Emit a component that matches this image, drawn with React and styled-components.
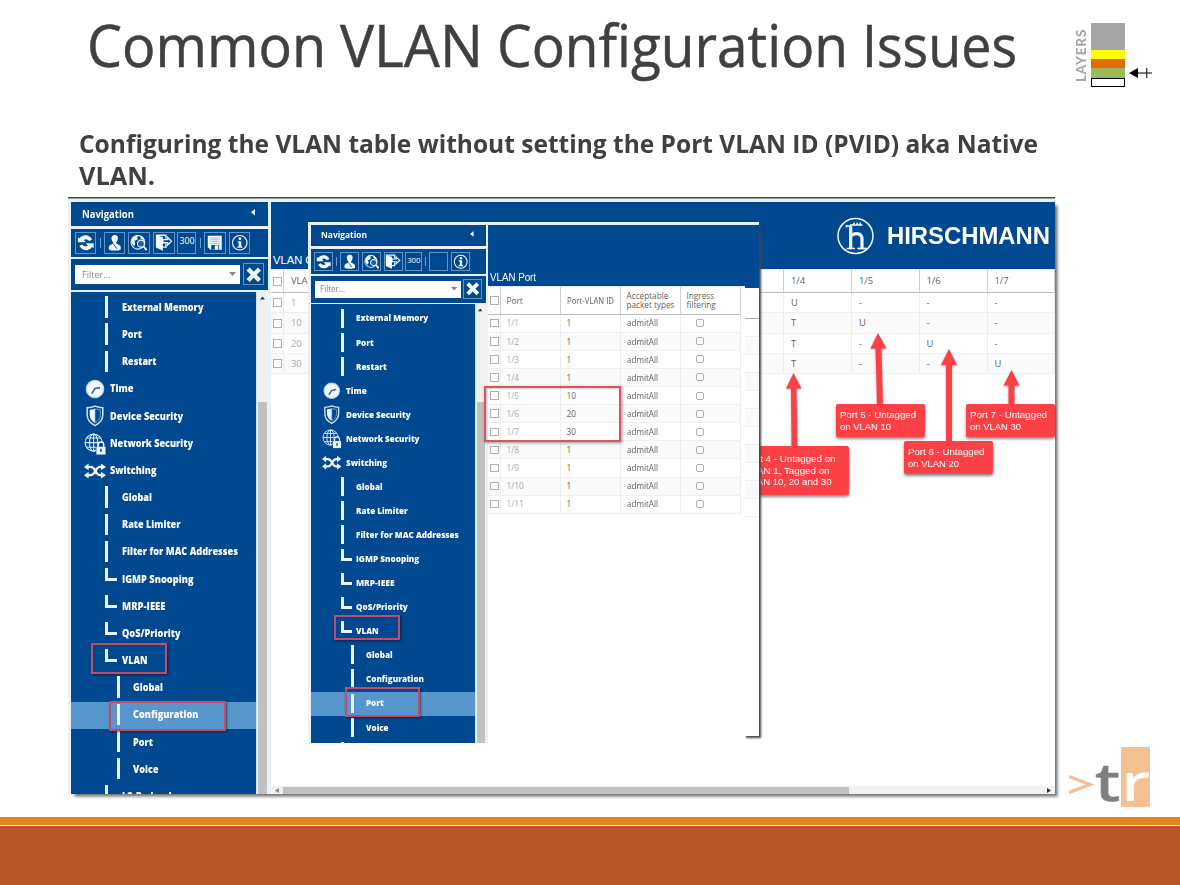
import React, { useLayoutEffect, useRef } from "react";
import styled, { createGlobalStyle } from "styled-components";

const BLUE = "#00488f";
const RED = "#fb4146";

const Global = createGlobalStyle`
  * { box-sizing: border-box; }
  body { margin: 0; background: #fff; overflow: hidden; }
`;

/* ---------- text stretched to a fixed measure ---------- */
const FitBox = styled.span`
  display: inline-block;
  flex: none;
  white-space: nowrap;
`;
const FitSpan = styled.span`
  display: inline-block;
  white-space: nowrap;
  transform-origin: 0 50%;
`;
function Fit({ w, children }) {
  const ref = useRef(null);
  useLayoutEffect(() => {
    const el = ref.current;
    const apply = () => {
      el.style.transform = "none";
      const width = el.getBoundingClientRect().width;
      if (width) el.style.transform = `scaleX(${w / width})`;
    };
    apply();
    document.fonts.ready.then(apply);
  }, [w]);
  return (
    <FitBox style={{ width: w }}>
      <FitSpan ref={ref}>{children}</FitSpan>
    </FitBox>
  );
}

/* ---------- slide ---------- */
const Slide = styled.main`
  position: relative;
  width: 1180px;
  height: 885px;
  overflow: hidden;
  background: #fff;
  display: flex;
  flex-direction: column;
  color: #404040;
`;
const Header = styled.header`
  display: flex;
  justify-content: space-between;
  height: 117px;
  padding: 0 28px 0 87px;
`;
const Title = styled.h1`
  margin: 8px 0 0;
  font: 400 59px/72px "Open Sans", sans-serif;
  font-variant-ligatures: none;
  -webkit-text-stroke: 0.5px #404040;
  color: #404040;
  width: 940px;
  display: flex;
  gap: 14px;
`;
const Layers = styled.div`
  display: flex;
  gap: 3px;
  align-items: flex-start;
  padding-top: 23px;
  svg { margin: 44px 0 0 1px; }
`;
const LayersText = styled.span`
  writing-mode: vertical-rl;
  transform: rotate(180deg);
  font: 900 13.500px/14px Lato, sans-serif;
  letter-spacing: 0.8px;
  color: #a6a6a6;
  height: 59px;
  text-align: left;
`;
const Stack = styled.div`
  width: 34px;
  display: flex;
  flex-direction: column;
`;
const Band = styled.div`
  height: ${(p) => p.$h}px;
  background: ${(p) => p.$c};
  border: ${(p) => (p.$line ? "1px solid #000" : "0")};
`;
const Lead = styled.p`
  margin: 11px 0 0 79px;
  font: 700 25px/31.5px "Open Sans", sans-serif;
  color: #404040;
  height: 69px;
  display: flex;
  flex-direction: column;
  align-items: flex-start;
`;
const Rule = styled.div`
  width: 987px;
  height: 2px;
  margin-left: 68px;
  border-top: 1px solid #404040;
  border-bottom: 1px solid #a0a0a0;
`;
const Footer = styled.footer`
  margin-top: auto;
  height: 68px;
  background: #ba572a;
  border-top: 8px solid #e2841d;
  box-shadow: inset 0 1px 0 #fff3e6;
`;
const Brand = styled.div`
  position: absolute;
  left: 1067px;
  top: 747px;
  display: flex;
  height: 60px;
  font: 500 52px/60px "Noto Sans", sans-serif;
  color: #7f7f7f;
`;
const BrandT = styled.span`
  width: 26px;
  padding-top: 4px;
  -webkit-text-stroke: 0.6px #7f7f7f;
`;
const BrandR = styled.span`
  width: 29px;
  height: 60px;
  padding: 4px 0 0 0;
  background: #f5c193;
  color: #fff;
`;

/* ---------- windows ---------- */
const Window = styled.section`
  position: absolute;
  display: flex;
  overflow: hidden;
  font-family: "Open Sans", sans-serif;
`;
const OuterWindow = styled(Window)`
  left: 68px;
  top: 199px;
  width: 987px;
  height: 595px;
  padding: 3px 0 0 3px;
  background: #e7f2fa;
`;
const OuterShade = styled.div`
  position: absolute;
  left: 72px;
  top: 203px;
  width: 983px;
  height: 591px;
  box-shadow: 2px 2px 3px 0.5px #6e6e6e;
`;
const InnerWindow = styled(Window)`
  left: 308px;
  top: 222px;
  width: 451px;
  height: 521px;
  padding: 3px 0 0 3px;
  background: #e7f2fa;
`;
const InnerEdge = styled.div`
  position: absolute;
  left: 745px;
  top: 227px;
  width: 14px;
  height: 509px;
  box-shadow: 1px 1px 2px 0.5px #444;
  clip-path: inset(0 -6px -6px 0);
`;

/* ---------- navigation (sizes in em: 10px or 8.86px base) ---------- */
const NavBox = styled.nav`
  flex: none;
  font-size: ${(p) => p.$k * 10}px;
  width: 19.7em;
  display: flex;
  flex-direction: column;
  color: #fff;
`;
const NavHead = styled.div`
  height: 2.4em;
  background: ${BLUE};
  display: flex;
  align-items: center;
  justify-content: space-between;
  padding: 0 1.3em 0 1.1em;
  b { font-size: 1em; line-height: 1; }
  svg { width: 0.4em; height: 0.65em; margin-top: -0.3em; }
`;
const Tools = styled.div`
  height: 2.85em;
  margin-top: 0.27em;
  background: ${BLUE};
  display: flex;
  align-items: center;
  padding-left: 0.35em;
`;
const Tool = styled.div`
  width: ${(p) => p.$w || 2.17}em;
  height: 2.2em;
  border: 1px solid #5f93c6;
  margin-right: ${(p) => p.$gap || 0.29}em;
  display: flex;
  align-items: center;
  justify-content: center;
  svg { width: 1.75em; height: 1.75em; }
  span { font-size: 0.88em; margin-top: -0.4em; }
`;
const Divider = styled.i`
  width: 1px;
  height: 1em;
  background: #6c9ccb;
  margin-right: 0.3em;
`;
const FilterRow = styled.div`
  height: 3.05em;
  margin-top: 0.2em;
  background: ${BLUE};
  display: flex;
  align-items: center;
  padding-left: 0.4em;
  gap: 0.25em;
`;
const FilterInput = styled.div`
  width: 16.5em;
  height: 1.9em;
  background: #fff;
  display: flex;
  align-items: center;
  justify-content: space-between;
  padding: 0 0.4em 0 0.65em;
  color: #888;
  span { font-size: 0.97em; }
  svg { width: 0.7em; height: 0.4em; }
`;
const TreeWrap = styled.div`
  flex: 1;
  min-height: 0;
  margin-top: 0.2em;
  display: flex;
  background: #f0f0f0;
`;
const Tree = styled.div`
  width: 18.6em;
  border-right: 1px solid #cfe3f2;
  background: ${BLUE};
  overflow: hidden;
  padding-top: 0.26em;
`;
const TreeRow = styled.div`
  position: relative;
  height: 2.717em;
  display: flex;
  align-items: center;
  padding-left: ${(p) => p.$pad}em;
  background: ${(p) => (p.$on ? "#5795cd" : "transparent")};
  font-weight: 700;
  line-height: 1;
  b { font-size: 0.97em; }
`;
const Bar = styled.i`
  align-self: flex-start;
  width: ${(p) => (p.$elbow ? 1.2 : 0.3)}em;
  height: ${(p) => (p.$elbow ? 1.3 : 2.15)}em;
  margin: 0.2em ${(p) => (p.$elbow ? 0.45 : 1.35)}em 0 0;
  border-left: 0.34em solid #e9f6ff;
  border-bottom: ${(p) => (p.$elbow ? "0.34em solid #e9f6ff" : "0")};
`;
const Glyph = styled.i`
  width: 2.3em;
  margin-right: 0.4em;
  display: flex;
  justify-content: center;
  svg { width: 2.2em; height: 2.2em; }
`;
const ScrollBar = styled.div`
  flex: 1;
  display: flex;
  flex-direction: column;
  align-items: center;
  svg { width: 0.5em; height: 0.4em; margin-top: 0.4em; }
`;
const Thumb = styled.div`
  width: 0.9em;
  margin-top: 10.2em;
  flex: 1;
  background: #c1c1c1;
`;
const Mark = styled.div`
  position: absolute;
  left: ${(p) => p.$x}em;
  top: ${(p) => p.$y}em;
  width: ${(p) => p.$w}em;
  height: ${(p) => p.$h}em;
  border: 2px solid #c24b65;
  box-shadow: 1px 1px 2px #0007;
  z-index: 2;
`;

const W = "#f2f9ff";
const ArrowLeft = () => <svg viewBox="0 0 5 8"><path d="M5 0v8L0 4z" fill={W} /></svg>;
const ArrowDown = () => <svg viewBox="0 0 8 4" preserveAspectRatio="none"><path d="M0 0h8L4 4z" fill="#888" /></svg>;
const ArrowUp = () => <svg viewBox="0 0 8 5"><path d="M0 5h8L4 0z" fill="#333" /></svg>;
const Refresh = () => (
  <svg viewBox="0 0 20 20" fill={W}>
    <path d="M1 9.500V3.800l1.700 1.300C5 1.800 9 .8 12.500 2c2.300.8 4 2.500 4.800 4.500l-3.600 1.600c-1.200-2.200-4-3-6-1.200L10 9.500z" />
    <path d="M19 10.500v5.700l-1.700-1.300c-2.300 3.300-6.300 4.300-9.800 3.100-2.300-.8-4-2.500-4.800-4.500l3.600-1.600c1.200 2.200 4 3 6 1.200L10 10.500z" />
  </svg>
);
const Person = () => (
  <svg viewBox="0 0 20 20" fill={W}>
    <path d="M10 1c3 0 4 2 3.6 4.500-.3 2-1 3.500-2 4.200l.2 1.200 3.700 2C17 14 17.300 16 16.500 18c-2 1.300-11 1.300-13 0-.8-2-.3-4 1-5.100l3.700-2 .2-1.200C7.200 9 6.600 7.500 6.300 5.500 6 3 7.200 1 10 1z" />
    <path d="M8.200 11l4.500 6" stroke={BLUE} strokeWidth="1.100" />
  </svg>
);
const GlobeSearch = () => (
  <svg viewBox="0 0 20 20">
    <circle cx="9" cy="9.500" r="7.800" fill="none" stroke={W} strokeWidth="1.200" />
    <path d="M2 6c2-3.500 5-4.800 8-4.500L8 4l1 2-4 2 1 3-1 3C2 12 1 9 2 6zM12 2c3 1 4.500 4 4.500 6L14 6l-2-1z" fill={W} />
    <circle cx="12.500" cy="11" r="4" fill="#1f64a8" stroke={W} strokeWidth="1.300" />
    <path d="M15.300 14l3.700 4.500" stroke={W} strokeWidth="2.200" />
  </svg>
);
const Exit = () => (
  <svg viewBox="0 0 20 20">
    <path d="M1 1.500h11.500v4M12.500 11v4H8" fill="none" stroke={W} strokeWidth="1.600" />
    <path d="M1 1.500l8 2V19l-8-3.500z" fill={W} />
    <path d="M9 6.500h5.500V4L19 8.300l-4.500 4.300V10H9z" fill={BLUE} stroke={W} strokeWidth="1.500" />
  </svg>
);
const Floppy = () => (
  <svg viewBox="0 0 20 20">
    <path d="M2 2h16v16H5l-3-3z" fill={W} />
    <path d="M4.500 4.500h11M4.500 6.500h11M4.500 8.500h11M4 10.800h12" stroke="#6d9ccb" strokeWidth=".7" />
    <path d="M6 12.500h9V18H6z" fill={BLUE} />
    <path d="M10 13h4v5h-4z" fill={W} />
  </svg>
);
const Info = () => (
  <svg viewBox="0 0 20 20">
    <circle cx="10" cy="10" r="8.300" fill="none" stroke={W} strokeWidth="1.300" />
    <circle cx="10.200" cy="5.400" r="1.600" fill={W} />
    <path d="M7.500 8.200h4.200v6h1.300v1.500H7.300v-1.500h1.500V9.700H7.500z" fill={W} />
  </svg>
);
const Cross = () => (
  <svg viewBox="0 0 20 20"><path d="M3.500 3.500l13 13M16.500 3.500l-13 13" stroke={W} strokeWidth="5" /></svg>
);
const Clock = () => (
  <svg viewBox="0 0 24 24">
    <circle cx="12" cy="12" r="9.500" fill="#f4f9fd" stroke="#b5d0ea" strokeWidth="1.300" />
    <circle cx="12" cy="12" r="7.600" fill="none" stroke="#b7cde2" strokeWidth=".7" strokeDasharray=".8 3" />
    <path d="M17.500 10.500l-5.500 1-3.500 5.500" fill="none" stroke="#2d6299" strokeWidth="1.700" />
  </svg>
);
const Shield = () => (
  <svg viewBox="0 0 24 24">
    <path d="M12 1.200c2.500 1 5.500 1.600 8.500 1.700v8c0 5-3.500 9-8.500 11.600C7 20 3.500 16 3.500 11V2.900c3-.1 6-.7 8.500-1.700z" fill={BLUE} stroke="#c8e0f4" strokeWidth="1.700" />
    <path d="M12 4.200v15.300c-3.500-2-5.800-5-5.800-8.700V5.300C8.300 5.200 10.300 4.800 12 4.200z" fill={W} />
    <path d="M12 4.200c1.700.6 3.700 1 5.800 1.100v5.500c0 3.700-2.300 6.700-5.800 8.700z" fill="none" stroke="#8fb8de" strokeWidth=".8" />
  </svg>
);
const GlobeLock = () => (
  <svg viewBox="0 0 24 24">
    <g fill="none" stroke="#d6eafa" strokeWidth="1.200">
      <circle cx="10.500" cy="10.500" r="9.300" />
      <ellipse cx="10.500" cy="10.500" rx="4.500" ry="9.300" />
      <path d="M10.500 1.200v18.600M1.200 10.500h18.600M2.800 5.500h15.400M2.800 15.500h12" />
    </g>
    <path d="M13 14h10v8H13z" fill={BLUE} />
    <path d="M15.500 15.500v-2.700a3 3 0 0 1 6 0v2.700" fill={BLUE} stroke={W} strokeWidth="1.500" />
    <path d="M13.500 15h10v8.500h-10z" fill={W} />
    <path d="M18.500 17.200v3.600" stroke={BLUE} strokeWidth="1.600" />
  </svg>
);
const Shuffle = () => (
  <svg viewBox="0 0 24 24">
    <path d="M3 7.500h4c3 0 4 1.500 5.500 4.500s2.500 4.500 5 4.500h3M3 16.500h4c3 0 4-1.500 5.500-4.500S15 7.500 17.500 7.500h3" fill="none" stroke={W} strokeWidth="2.600" />
    <path d="M18.500 3.700l5.500 3.800-5.500 3.800zM18.500 12.700l5.500 3.800-5.500 3.800zM5 3.700L0 7.500l5 3.800zM5 12.700l-5 3.800 5 3.800z" fill={W} />
  </svg>
);

const TREE = [
  ["bar", "External Memory", 81.5],
  ["bar", "Port", 20],
  ["bar", "Restart", 34.5],
  [Clock, "Time", 23.500],
  [Shield, "Device Security", 73],
  [GlobeLock, "Network Security", 83],
  [Shuffle, "Switching", 46.500],
  ["bar", "Global", 30],
  ["bar", "Rate Limiter", 58.500],
  ["bar", "Filter for MAC Addresses", 116],
  ["elbow", "IGMP Snooping", 71.500],
  ["elbow", "MRP-IEEE", 43.500],
  ["elbow", "QoS/Priority", 58.500],
  ["elbow", "VLAN", 25.500],
  ["sub", "Global", 30],
  ["sub", "Configuration", 65.500],
  ["sub", "Port", 20],
  ["sub", "Voice", 25.500],
];

function Navigation({ k, active, save, marks, next }) {
  const rows = [...TREE, ["bar", next, 72]];
  return (
    <NavBox $k={k}>
      <NavHead><b><Fit w={52 * k}>Navigation</Fit></b><ArrowLeft /></NavHead>
      <Tools>
        <Tool $gap={0.35}><Refresh /></Tool>
        <Divider />
        <Tool><Person /></Tool>
        <Tool><GlobeSearch /></Tool>
        <Tool><Exit /></Tool>
        <Tool $w={1.9} $gap={0.35}><span>300</span></Tool>
        <Divider />
        <Tool>{save && <Floppy />}</Tool>
        <Tool><Info /></Tool>
      </Tools>
      <FilterRow>
        <FilterInput><span><Fit w={28.500 * k}>Filter...</Fit></span><ArrowDown /></FilterInput>
        <Tool><Cross /></Tool>
      </FilterRow>
      <TreeWrap>
        <Tree>
          {rows.map(([kind, text, w], i) => {
            const on = kind === "sub" && text === active;
            const isIcon = typeof kind !== "string";
            const Icon = kind;
            return (
              <TreeRow key={i} $on={on} $pad={isIcon ? 1.2 : kind === "sub" ? 4.550 : 3.400}>
                {isIcon ? <Glyph><Icon /></Glyph> : <Bar $elbow={kind === "elbow"} />}
                {text && <b><Fit w={w * k}>{text}</Fit></b>}
                {marks[i] && <Mark $x={marks[i][0]} $y={marks[i][1]} $w={marks[i][2]} $h={marks[i][3]} />}
              </TreeRow>
            );
          })}
        </Tree>
        <ScrollBar><ArrowUp /><Thumb /></ScrollBar>
      </TreeWrap>
    </NavBox>
  );
}

/* ---------- content panes ---------- */
const Pane = styled.div`
  flex: none;
  display: flex;
  flex-direction: column;
  margin-left: ${(p) => p.$gap}px;
  background: #fff;
  width: ${(p) => p.$w}px;
`;
const Banner = styled.div`
  flex: none;
  height: ${(p) => p.$h}px;
  padding: 0 5px 3px 2px;
  background: ${BLUE};
  color: #fff;
  display: flex;
  justify-content: space-between;
  align-items: flex-end;
  font: ${(p) => p.$fs}px/12px "Liberation Sans", sans-serif;
`;
const Company = styled.div`
  display: flex;
  align-items: center;
  gap: 12px;
  height: 100%;
  padding-top: 3px;
  font: 700 24.500px/38px "Liberation Sans", sans-serif;
  svg { width: 38px; height: 38px; }
`;
const CompanyName = styled.span`
  padding-top: 1px;
`;
const Grid = styled.div`
  display: grid;
  grid-template-columns: ${(p) => p.$cols};
  width: ${(p) => p.$w}px;
  border-top: 1px solid #e4e9ee;
  color: #5b5b5b;
  font-size: ${(p) => p.$fs}px;
`;
const Cell = styled.div`
  height: ${(p) => p.$h}px;
  display: flex;
  flex-direction: column;
  justify-content: center;
  align-items: flex-start;
  padding-left: ${(p) => p.$pl ?? 6}px;
  line-height: 9.500px;
  white-space: nowrap;
  color: ${(p) => (p.$dim ? "#a8a8a8" : "#5f5f5f")};
  background: ${(p) => (p.$alt ? "#fafafa" : "#fff")};
  border-right: 1px solid ${(p) => (p.$head ? "#d0d0d0" : "#ededed")};
  border-bottom: 1px solid ${(p) => (p.$head ? "#bdbdbd" : "#efefef")};
`;
const Box = styled.i`
  width: ${(p) => p.$s || 9}px;
  height: ${(p) => p.$s || 9}px;
  border: 1px solid #b0b0b0;
  border-radius: ${(p) => p.$r || 0}px;
  background: #fff;
`;
const HScroll = styled.div`
  margin-top: auto;
  height: 8px;
  display: flex;
  align-items: center;
  background: #f1f1f1;
  padding: 0 4px;
  justify-content: space-between;
  svg { width: 4px; height: 5px; }
`;
const HThumb = styled.div`
  width: 566px;
  height: 7px;
  background: #c1c1c1;
  margin: 0 auto 0 4px;
`;

const HirschmannLogo = () => (
  <svg viewBox="0 0 38 38" fill="none" stroke="#f2f9ff">
    <circle cx="18.500" cy="19" r="17.500" strokeWidth="1.500" />
    <path d="M9 9h5.500M9.500 8v2.500M9.500 31.500h8.500" strokeWidth="1.700" />
    <path d="M13.700 9v22" strokeWidth="3.200" />
    <path d="M13 8h12.500M16.500 8l1-2.500M19.500 8l1-2.500M22.500 8l1-2.500" strokeWidth="1.400" />
    <path d="M15 18.500c3-3 10-2.500 10 3.500v9" strokeWidth="3.200" />
    <path d="M20.500 31.500h9" strokeWidth="1.700" />
  </svg>
);

const OUTER_ROWS = [
  ["1", "U", "-", "-", "-"],
  ["10", "T", "U", "-", "-"],
  ["20", "T", "-", "U", "-"],
  ["30", "T", "-", "-", "U"],
];

function OuterPane() {
  return (
    <Pane $w={784} $gap={3}>
      <Banner $h={67} $fs={11.200}>
        <span>VLAN Configuration</span>
        <Company><HirschmannLogo /><CompanyName><Fit w={163}>HIRSCHMANN</Fit></CompanyName></Company>
      </Banner>
      <Grid $w={784} $fs={9.4} $cols="13px 500px 68px 67.5px 68px 67.5px">
        {["", "VLAN ID", "1/4", "1/5", "1/6", "1/7"].map((t, i) => (
          <Cell key={i} $head $h={23.200} $pl={i ? 7 : 2}>{i ? t : <Box />}</Cell>
        ))}
        {OUTER_ROWS.map((r, n) => (
          <React.Fragment key={n}>
            <Cell $alt={n % 2} $h={20.250} $pl={2}><Box /></Cell>
            {r.map((t, i) => (
              <Cell key={i} $alt={n % 2} $h={20.250} $dim={i === 0} $pl={7}>{t}</Cell>
            ))}
          </React.Fragment>
        ))}
      </Grid>
      <HScroll>
        <svg viewBox="0 0 4 5"><path d="M4 0v5L0 2.500z" fill="#888" /></svg>
        <HThumb />
        <svg viewBox="0 0 4 5"><path d="M0 0v5l4-2.500z" fill="#333" /></svg>
      </HScroll>
    </Pane>
  );
}

const PVID = { 5: "10", 6: "20", 7: "30" };
const InnerBody = styled.div`
  display: flex;
  align-items: flex-start;
  position: relative;
`;
const Backing = styled.div`
  width: 14px;
  margin-left: 4px;
  border-top: 2px solid ${BLUE};
`;
const BackRow = styled.div`
  height: ${(p) => p.$h || 18}px;
  background: ${(p) => (p.$alt ? "#fafafa" : "#fff")};
  border-bottom: 1px solid ${(p) => (p.$h ? "#aaa" : "#efefef")};
`;
const PvidMark = styled.div`
  position: absolute;
  left: -4px;
  top: 99.500px;
  width: 137px;
  height: 56px;
  border: 2px solid #d9575a;
  box-shadow: 1px 1px 3px #0006, inset 1px 1px 2px #0003;
`;

function InnerPane() {
  return (
    <Pane $w={271.500} $gap={2.5}>
      <Banner $h={61} $fs={10.500}><span><Fit w={46}>VLAN Port</Fit></span></Banner>
      <InnerBody>
        <Grid $w={253} $fs={8.2} $cols="12.5px 60px 60px 60px 60.5px">
          {[<Box $s={8.500} />, "Port", <Fit w={47}>Port-VLAN ID</Fit>, ["Acceptable", "packet types"], ["Ingress", "filtering"]].map((t, i) => (
            <Cell key={i} $head $h={27.600} $pl={i ? 6 : 2}>
              {Array.isArray(t) ? t.map((x) => <span key={x}>{x}</span>) : t}
            </Cell>
          ))}
          {Array.from({ length: 11 }, (_, n) => n + 1).map((n) => {
            const a = n % 2 === 0;
            return (
              <React.Fragment key={n}>
                <Cell $h={18.120} $alt={a} $pl={2}><Box $s={8.500} /></Cell>
                <Cell $h={18.120} $alt={a} $dim>1/{n}</Cell>
                <Cell $h={18.120} $alt={a}>{PVID[n] || "1"}</Cell>
                <Cell $h={18.120} $alt={a}><Fit w={31}>admitAll</Fit></Cell>
                <Cell $h={18.120} $alt={a} $pl={15.500}><Box $s={8} $r={2} /></Cell>
              </React.Fragment>
            );
          })}
        </Grid>
        <Backing>
          <BackRow $h={31} />
          {Array.from({ length: 11 }, (_, n) => <BackRow key={n} $alt={n % 2} />)}
        </Backing>
        <PvidMark />
      </InnerBody>
    </Pane>
  );
}

/* ---------- annotations ---------- */
const Callout = styled.div`
  position: absolute;
  left: ${(p) => p.$x}px;
  top: ${(p) => p.$y}px;
  width: ${(p) => p.$w}px;
  height: ${(p) => p.$h}px;
  padding: ${(p) => p.$pt || 5}px 0 0 4px;
  display: flex;
  flex-direction: column;
  align-items: flex-start;
  background: ${RED};
  border-radius: 2px;
  color: #fff;
  font: 9.800px/11.500px "Liberation Sans", sans-serif;
  box-shadow: 0 2px 3px #0007;
`;
const Arrows = styled.svg`
  position: absolute;
  left: 760px;
  top: 320px;
  filter: drop-shadow(0 1px 1px #0005);
`;

export default function App() {
  return (
    <Slide>
      <Global />
      <Header>
        <Title>
          <Fit w={239}>Common</Fit>
          <Fit w={143}>VLAN</Fit>
          <Fit w={351}>Configuration</Fit>
          <Fit w={155}>Issues</Fit>
        </Title>
        <Layers>
          <LayersText>LAYERS</LayersText>
          <Stack>
            <Band $h={27} $c="#a5a5a5" />
            <Band $h={9} $c="#ffff00" />
            <Band $h={9} $c="#e36c0a" />
            <Band $h={10} $c="#9bbb59" />
            <Band $h={9} $c="#fff" $line />
          </Stack>
          <svg width="23" height="12" viewBox="0 0 23 12">
            <path d="M0 6l9-5v10zM8 5.500h15v1H8zM17.300 1h1v10h-1z" fill="#000" />
          </svg>
        </Layers>
      </Header>
      <Lead>
        <Fit w={959}>Configuring the VLAN table without setting the Port VLAN ID (PVID) aka Native</Fit>
        <Fit w={76}>VLAN.</Fit>
      </Lead>
      <Rule />

      <OuterShade />
      <OuterWindow>
        <Navigation
          k={1}
          save
          active="Configuration"
          next="L2-Redundancy"
          marks={{ 13: [1.950, -0.45, 7.600, 3.150], 15: [3.8, -0.1, 11.700, 3.050] }}
        />
        <OuterPane />
      </OuterWindow>

      <Arrows width="300" height="130" fill={RED}>
        <path d="M33.500 53l8 15.500h-5l1 58h-6l-.5-58h-5z" />
        <path d="M118 13l8.500 15.500h-5l1.500 56h-6l-1.500-56h-5z" />
        <path d="M189 29l8 16h-5v77h-6V45h-5z" />
        <path d="M251.500 50l8 15.500h-5V86h-6V65.500h-5z" />
      </Arrows>
      <Callout $x={741} $y={446} $w={108} $h={49} $pt={7}>
        <Fit w={90.500}>Port 4 - Untagged on</Fit>
        <Fit w={84.500}>VLAN 1, Tagged on</Fit>
        <Fit w={86.500}>VLAN 10, 20 and 30</Fit>
      </Callout>
      <Callout $x={836} $y={404} $w={89} $h={33}>
        <Fit w={76}>Port 5 - Untagged</Fit>
        <Fit w={51}>on VLAN 10</Fit>
      </Callout>
      <Callout $x={904} $y={441} $w={89} $h={33}>
        <Fit w={76.500}>Port 6 - Untagged</Fit>
        <Fit w={51}>on VLAN 20</Fit>
      </Callout>
      <Callout $x={966} $y={404} $w={89} $h={33}>
        <Fit w={77}>Port 7 - Untagged</Fit>
        <Fit w={51}>on VLAN 30</Fit>
      </Callout>

      <InnerWindow>
        <Navigation
          k={0.886}
          active="Port"
          marks={{ 13: [2.55, -0.5, 7.500, 2.850], 16: [3.8, -0.5, 8.500, 3.350] }}
        />
        <InnerPane />
      </InnerWindow>
      <InnerEdge />

      <Brand>
        <svg width="28" height="60" viewBox="0 0 28 60">
          <path d="M2 29.500l21 8-21 8" fill="none" stroke="#f5c193" strokeWidth="3.400" />
        </svg>
        <BrandT><Fit w={25}>t</Fit></BrandT>
        <BrandR><Fit w={29}>r</Fit></BrandR>
      </Brand>
      <Footer />
    </Slide>
  );
}
